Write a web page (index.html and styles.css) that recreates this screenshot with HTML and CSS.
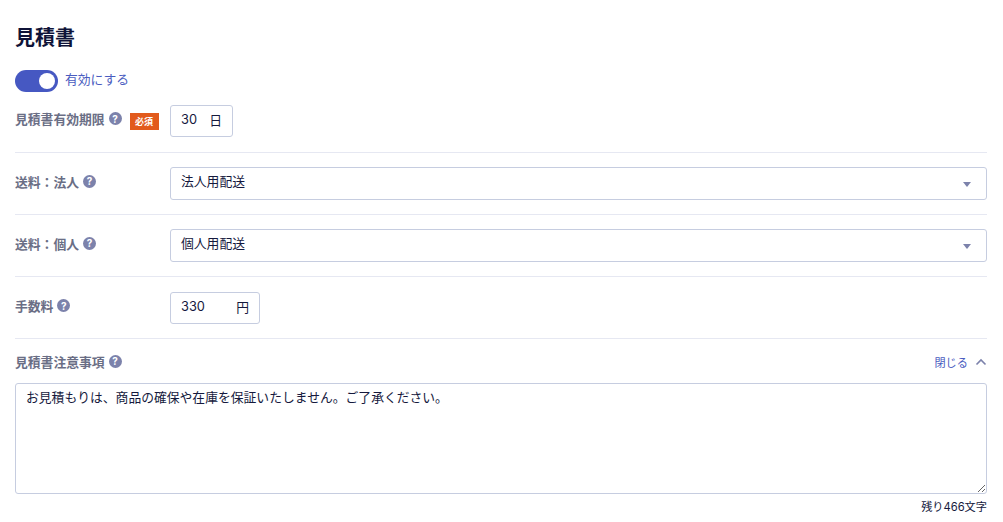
FILE: index.html
```html
<!DOCTYPE html>
<html lang="ja">
<head>
<meta charset="utf-8">
<title>見積書</title>
<link rel="stylesheet" href="styles.css">
</head>
<body>
<main class="page">
  <h1 class="title">見積書</h1>
  <div class="toggle-row">
    <span class="toggle"><span class="knob"></span></span>
    <span class="toggle-label">有効にする</span>
  </div>
  <div class="row row-first">
    <div class="label">
      <span>見積書有効期限</span>
      <span class="help">?</span>
      <span class="required">必須</span>
    </div>
    <div class="unit-input unit-days"><span>30</span><span>日</span></div>
  </div>
  <div class="row">
    <div class="label"><span>送料：法人</span><span class="help">?</span></div>
    <div class="select"><span>法人用配送</span><span class="caret"></span></div>
  </div>
  <div class="row">
    <div class="label"><span>送料：個人</span><span class="help">?</span></div>
    <div class="select"><span>個人用配送</span><span class="caret"></span></div>
  </div>
  <div class="row row-fee">
    <div class="label"><span>手数料</span><span class="help">?</span></div>
    <div class="unit-input unit-yen"><span>330</span><span>円</span></div>
  </div>
  <section class="notes">
    <div class="notes-head">
      <div class="label"><span>見積書注意事項</span><span class="help">?</span></div>
      <div class="close">
        <span>閉じる</span>
        <svg class="chevron" width="12" height="8" viewBox="0 0 12 8" aria-hidden="true"><path d="M1.500 6.500 6 2l4.500 4.500" fill="none" stroke="#7c82ab" stroke-width="1.600"/></svg>
      </div>
    </div>
    <textarea class="textarea">お見積もりは、商品の確保や在庫を保証いたしません。ご了承ください。</textarea>
    <div class="count">残り466文字</div>
  </section>
</main>
</body>
</html>
```
FILE: styles.css
```css
* { box-sizing: border-box; }
html, body { margin: 0; padding: 0; background: #fff; }
body {
  font-family: Inter, "Noto Sans CJK JP", sans-serif;
  font-size: 12.800px;
  color: #15193d;
  overflow: hidden;
}
.page { padding: 25px 16px 0 15px; }
.title {
  margin: 0;
  font-size: 20px;
  line-height: 26px;
  font-weight: 700;
  color: #0f1338;
}
.toggle-row {
  display: flex;
  align-items: center;
  gap: 7px;
  margin-top: 19px;
  height: 22px;
}
.toggle {
  display: flex;
  align-items: center;
  justify-content: flex-end;
  width: 43px;
  height: 22px;
  padding-right: 3px;
  border-radius: 11px;
  background: #4658c2;
}
.knob { width: 16px; height: 16px; border-radius: 50%; background: #fff; }
.toggle-label { padding-bottom: 5px; color: #4a5cc0; }
.row {
  display: flex;
  align-items: center;
  padding: 14px 0;
  border-bottom: 1px solid #e6e8f2;
}
.row-first { padding-top: 13px; padding-bottom: 15px; }
.row-fee { padding-top: 15px; }
.label {
  display: flex;
  align-items: center;
  flex: 0 0 155px;
  padding-bottom: 5px;
  font-weight: 700;
  color: #6a6e85;
}
.help {
  display: flex;
  align-items: center;
  justify-content: center;
  width: 13px;
  height: 13px;
  margin-left: 4px;
  border-radius: 50%;
  background: #7c82ab;
  color: #fff;
  font-size: 10px;
  font-weight: 700;
  line-height: 1;
}
.required {
  margin-left: 8px;
  margin-top: 5px;
  width: 29px;
  height: 17px;
  background: #e25a1c;
  color: #fff;
  font-size: 9px;
  line-height: 17px;
  text-align: center;
}
.unit-input, .select {
  display: flex;
  align-items: center;
  justify-content: space-between;
  border: 1px solid #c6cde0;
  border-radius: 3px;
  padding: 0 10px 4px;
  background: #fff;
}
.unit-input { height: 32px; }
.unit-days { width: 63px; }
.unit-yen { width: 90px; }
.select { flex: 1; height: 33px; padding-bottom: 6px; }
.caret {
  width: 0;
  height: 0;
  margin-right: 5px;
  margin-top: 7px;
  border-left: 4.500px solid transparent;
  border-right: 4.500px solid transparent;
  border-top: 5px solid #7c82ab;
}
.notes { padding-top: 16px; }
.notes-head {
  display: flex;
  align-items: center;
  justify-content: space-between;
  height: 17px;
}
.notes-head .label { flex: none; }
.close {
  display: flex;
  align-items: center;
  gap: 7px;
  padding-bottom: 3px;
  color: #4a5cc0;
  font-size: 11.200px;
}
.textarea {
  display: block;
  width: 100%;
  height: 111px;
  margin-top: 11px;
  padding: 5px 10px;
  border: 1px solid #c6cde0;
  border-radius: 3px;
  font: inherit;
  color: inherit;
  line-height: 17px;
  outline: none;
}
.count {
  margin-top: 5px;
  text-align: right;
  font-size: 11.200px;
  line-height: 16px;
}
```
